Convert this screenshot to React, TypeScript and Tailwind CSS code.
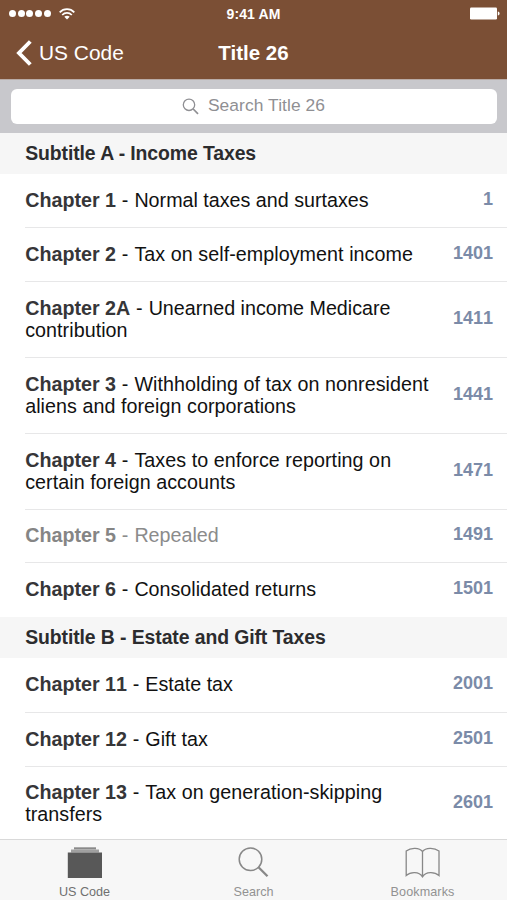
type Chapter = { name: string; title: string[]; section: string; height: string; repealed?: boolean; last?: boolean };

const subtitleA: Chapter[] = [
  { name: 'Chapter 1', title: ['Normal taxes and surtaxes'], section: '1', height: 'h-[54px]' },
  { name: 'Chapter 2', title: ['Tax on self-employment income'], section: '1401', height: 'h-[54px]' },
  { name: 'Chapter 2A', title: ['Unearned income Medicare', 'contribution'], section: '1411', height: 'h-[76px]' },
  { name: 'Chapter 3', title: ['Withholding of tax on nonresident', 'aliens and foreign corporations'], section: '1441', height: 'h-[76px]' },
  { name: 'Chapter 4', title: ['Taxes to enforce reporting on', 'certain foreign accounts'], section: '1471', height: 'h-[76px]' },
  { name: 'Chapter 5', title: ['Repealed'], section: '1491', height: 'h-[53px]', repealed: true },
  { name: 'Chapter 6', title: ['Consolidated returns'], section: '1501', height: 'h-[54px]', last: true },
];

const subtitleB: Chapter[] = [
  { name: 'Chapter 11', title: ['Estate tax'], section: '2001', height: 'h-[55px]' },
  { name: 'Chapter 12', title: ['Gift tax'], section: '2501', height: 'h-[54px]' },
  { name: 'Chapter 13', title: ['Tax on generation-skipping', 'transfers'], section: '2601', height: 'h-[74px]', last: true },
];

function SectionHeader({ text }: { text: string }) {
  return (
    <h2 className="flex h-[41px] shrink-0 items-center bg-[#f6f6f6] pl-[25.2px] text-[19.4px] font-bold tracking-[-0.09px] text-[#2c2c2e]">
      {text}
    </h2>
  );
}

function ChapterRow({ chapter }: { chapter: Chapter }) {
  return (
    <li className={`flex shrink-0 pl-[25px] ${chapter.height}`}>
      <div
        className={`flex flex-1 items-center justify-between border-b pr-[14px] pb-[1.4px] ${chapter.last ? 'border-transparent' : 'border-[#e7e7e8]'}`}
      >
        <p
          className={`pl-[0.2px] text-[19.7px] leading-[22px] whitespace-nowrap ${chapter.repealed ? 'text-[#8b8b8b]' : 'text-[#111111]'}`}
        >
          <span className={`font-bold [font-kerning:none] ${chapter.repealed ? 'text-[#858585]' : 'text-[#363638]'}`}>
            {chapter.name}
          </span>
          <span className="tracking-[0.3px]">{' - '}</span>
          <span className={chapter.title[0].startsWith('Tax') || chapter.title[0].startsWith('With') ? 'tracking-[0.06px]' : ''}>
            {chapter.title[0]}
          </span>
          {chapter.title[1] && <span className="block tracking-[0.05px]">{chapter.title[1]}</span>}
        </p>
        <span className="pb-[2px] text-[18px] leading-[22px] font-bold text-[#7b8ba8] [font-kerning:none]">
          {chapter.section}
        </span>
      </div>
    </li>
  );
}

function StatusBar() {
  return (
    <div className="grid h-[27px] grid-cols-3 items-center pr-[7px] pl-[9px]">
      <div className="flex items-center gap-[8.5px]">
        <div className="flex gap-[1.7px]">
          {[0, 1, 2, 3, 4].map((n) => (
            <span key={n} className="size-[7px] rounded-full bg-white" />
          ))}
        </div>
        <svg width="16" height="12" viewBox="0 0 16 12" fill="none" stroke="#fff" strokeWidth="1.7">
          <path d="M0.7 4.4C4.7 0.1 11.3 0.1 15.3 4.4" />
          <path d="M3.2 7C5.8 4.2 10.2 4.2 12.8 7" />
          <path d="M8 11.5L5.3 8.7C6.8 7.3 9.2 7.3 10.7 8.7Z" fill="#fff" stroke="none" />
        </svg>
      </div>
      <span className="-ml-[2px] text-center text-[14px] leading-none font-bold tracking-[0.1px]">9:41 AM</span>
      <svg className="justify-self-end" width="31" height="13" viewBox="0 0 31 13" fill="#fff">
        <rect x="1" y="0.5" width="27" height="12" rx="1.2" />
        <path d="M28.8 4.6C31.2 5 31.2 8 28.8 8.4Z" />
      </svg>
    </div>
  );
}

export default function App() {
  return (
    <div className="flex h-[900px] w-[507px] flex-col overflow-hidden bg-white font-['Liberation_Sans',Arial,sans-serif]">
      <header className="h-[79px] shrink-0 bg-[#7b4f35] text-white">
        <StatusBar />
        <div className="grid h-[52px] grid-cols-3 items-center">
          <div className="flex items-center gap-[6px] pl-[16px]">
            <svg width="17" height="26" viewBox="0 0 17 26" fill="none" stroke="#fff" strokeWidth="3.9">
              <path d="M14.3 1.5L3 13L14.3 24.5" />
            </svg>
            <span className="text-[20.9px] leading-none">US Code</span>
          </div>
          <h1 className="text-center text-[20.5px] leading-none font-bold">Title 26</h1>
        </div>
      </header>

      <div className="flex h-[54px] shrink-0 border-t border-[#b9aba6] bg-[#c8c8cc] px-[10.5px] pt-[8.5px]">
        <div className="flex h-[35px] flex-1 items-center justify-center gap-[9px] rounded-[6px] bg-white text-[#8f8f93]">
          <svg width="17" height="17" viewBox="0 0 17 17" fill="none" stroke="currentColor" strokeWidth="1.3">
            <circle cx="7" cy="6.8" r="5.7" />
            <path d="M11.2 11L16 15.8" strokeWidth="1.7" />
          </svg>
          <span className="text-[17.4px] leading-none tracking-[0.08px]">Search Title 26</span>
        </div>
      </div>

      <main className="flex min-h-0 flex-1 flex-col overflow-hidden">
        <SectionHeader text="Subtitle A - Income Taxes" />
        <ul>{subtitleA.map((c) => <ChapterRow key={c.name} chapter={c} />)}</ul>
        <SectionHeader text="Subtitle B - Estate and Gift Taxes" />
        <ul>{subtitleB.map((c) => <ChapterRow key={c.name} chapter={c} />)}</ul>
      </main>

      <nav className="grid h-[61px] shrink-0 grid-cols-3 border-t border-[#d9d9d9] bg-[#f7f7f7] text-center text-[12.6px] leading-none text-[#929292]">
        <div className="flex flex-col items-center pt-[7px] text-[#707070]">
          <svg width="36" height="32" viewBox="0 0 36 32">
            <path d="M7 0.3H29V2.5H7Z" fill="#8a8a8a" />
            <path d="M4 2.5H32V5.5H4Z" fill="#a0a0a0" />
            <path d="M0.8 5.5H35V31H0.8Z" fill="#585858" />
          </svg>
          <span className="mt-[7px]">US Code</span>
        </div>
        <div className="flex flex-col items-center pt-[7px]">
          <svg width="32" height="32" viewBox="0 0 32 32" fill="none" stroke="#888">
            <circle cx="12.5" cy="12.2" r="11.3" strokeWidth="1.5" />
            <path d="M20.5 20.3L29.5 29.3" strokeWidth="2.3" />
          </svg>
          <span className="mt-[7px]">Search</span>
        </div>
        <div className="flex flex-col items-center pt-[7px]">
          <svg width="36" height="32" viewBox="0 0 36 32" fill="none" stroke="#888" strokeWidth="1.3">
            <path d="M17.5 4.5C14.5 0.6 6 0.2 1.2 4V28.5C5.5 24.6 14 24.2 17.5 29.8C21 24.2 29.5 24.6 34 28.5V4C29 0.2 20.5 0.6 17.5 4.5ZM17.5 4.5V29.8" />
          </svg>
          <span className="mt-[7px] tracking-[0.1px]">Bookmarks</span>
        </div>
      </nav>
    </div>
  );
}
